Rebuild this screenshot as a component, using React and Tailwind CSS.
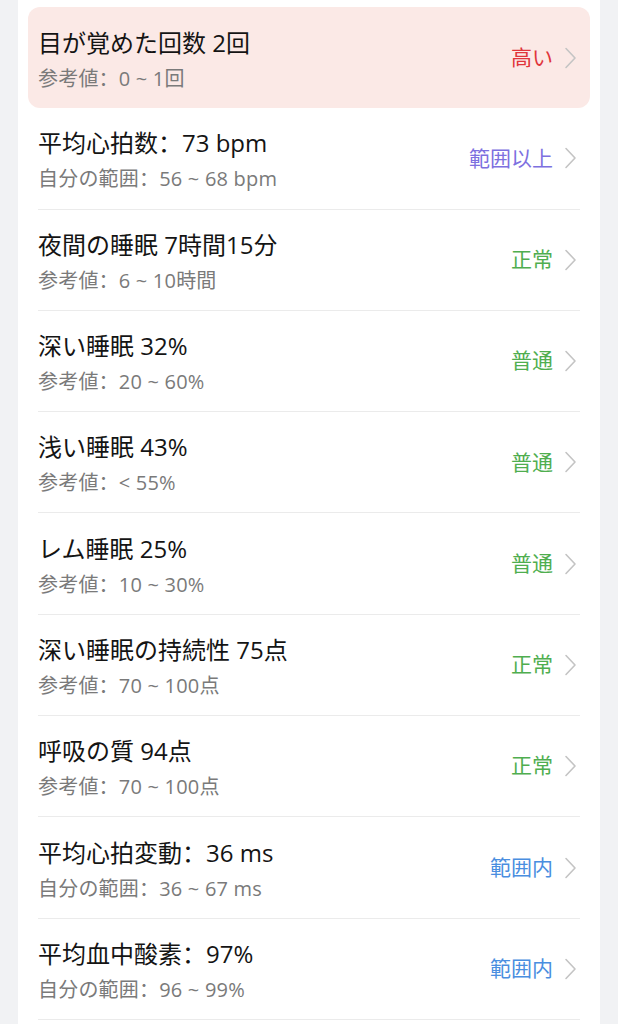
const rows = [
  { title: '目が覚めた回数 2回', sub: '参考値：0 ~ 1回', label: '高い', color: 'text-[#e0353b]', alert: true },
  { title: '平均心拍数：73 bpm', sub: '自分の範囲：56 ~ 68 bpm', label: '範囲以上', color: 'text-[#7d70df]' },
  { title: '夜間の睡眠 7時間15分', sub: '参考値：6 ~ 10時間', label: '正常', color: 'text-[#4fae4f]' },
  { title: '深い睡眠 32%', sub: '参考値：20 ~ 60%', label: '普通', color: 'text-[#4fae4f]' },
  { title: '浅い睡眠 43%', sub: '参考値：< 55%', label: '普通', color: 'text-[#4fae4f]' },
  { title: 'レム睡眠 25%', sub: '参考値：10 ~ 30%', label: '普通', color: 'text-[#4fae4f]' },
  { title: '深い睡眠の持続性 75点', sub: '参考値：70 ~ 100点', label: '正常', color: 'text-[#4fae4f]' },
  { title: '呼吸の質 94点', sub: '参考値：70 ~ 100点', label: '正常', color: 'text-[#4fae4f]' },
  { title: '平均心拍変動：36 ms', sub: '自分の範囲：36 ~ 67 ms', label: '範囲内', color: 'text-[#4a8ee0]' },
  { title: '平均血中酸素：97%', sub: '自分の範囲：96 ~ 99%', label: '範囲内', color: 'text-[#4a8ee0]' },
];

const Chevron = () => (
  <svg width="13" height="22" viewBox="0 0 13 22" fill="none" className="flex-shrink-0">
    <path d="M2 1.5 L11 11 L2 20.5" stroke="#c4c4c4" strokeWidth="1.6" strokeLinecap="round" strokeLinejoin="round" />
  </svg>
);

const App = () => {
  return (
    <div className="min-h-screen bg-[#f1f2f4] px-[18px] font-['Open_Sans','Noto_Sans_CJK_SC',sans-serif]">
      <div className="bg-white min-h-[1024px] px-[10px] pt-[7px]">
        {rows.map((r, i) => (
          <div key={i} className={r.alert ? 'bg-[#fbe9e6] rounded-xl px-[10px]' : 'px-[10px]'}>
            <div className={`h-[101.3px] flex items-center justify-between ${r.alert ? '' : 'border-b border-[#ebebeb]'}`}>
              <div className="flex flex-col gap-[6px] pt-[4px]">
                <p className="text-[24px] leading-[32px] text-[#141414]">{r.title}</p>
                <p className="text-[20px] leading-[28px] text-[#7a7a7a] tracking-[0.2px]">{r.sub}</p>
              </div>
              <div className="flex items-center gap-[11px] pr-[3px]">
                <span className={`text-[21px] ${r.color}`}>{r.label}</span>
                <Chevron />
              </div>
            </div>
          </div>
        ))}
      </div>
    </div>
  );
};

export default App;
